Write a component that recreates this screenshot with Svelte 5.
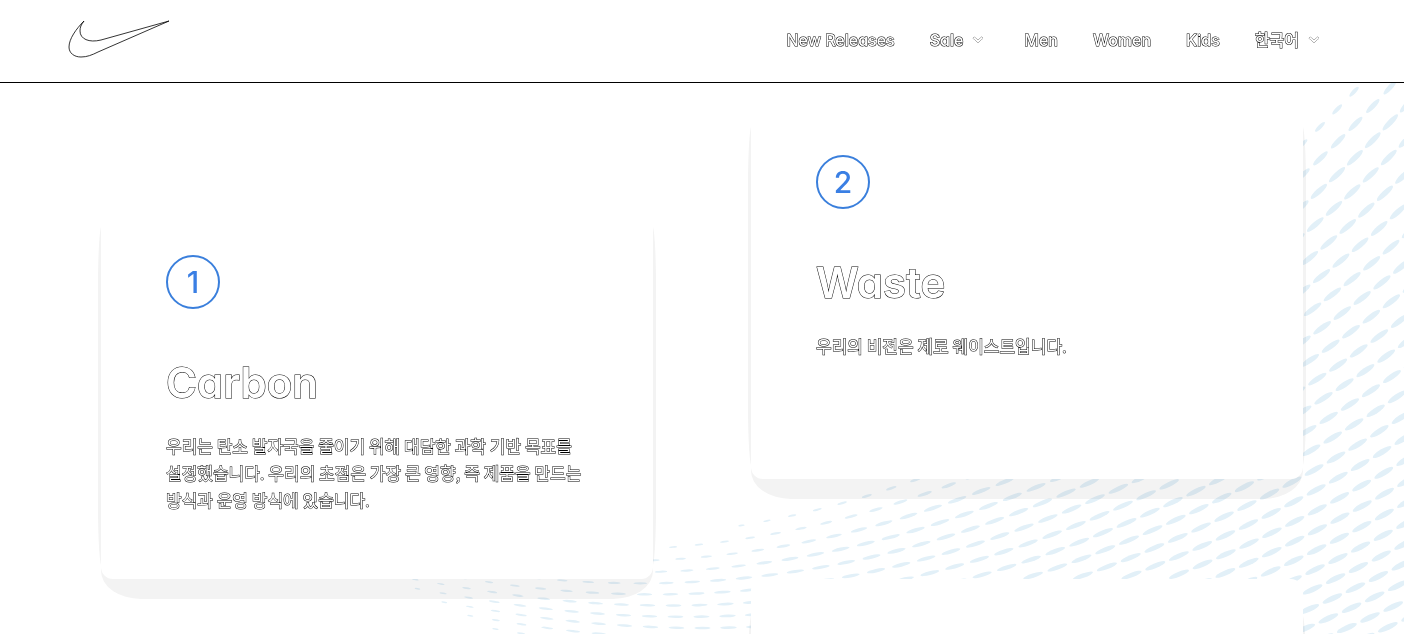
<script>
  const nav = [
    { label: 'New Releases' },
    { label: 'Sale', menu: true },
    { label: 'Men' },
    { label: 'Women' },
    { label: 'Kids' },
    { label: '한국어', menu: true }
  ];

  const cards = [
    {
      number: 1,
      title: 'Carbon',
      text: '우리는 탄소 발자국을 줄이기 위해 대담한 과학 기반 목표를 설정했습니다. 우리의 초점은 가장 큰 영향, 즉 제품을 만드는 방식과 운영 방식에 있습니다.'
    },
    { number: 2, title: 'Waste', text: '우리의 비전은 제로 웨이스트입니다.' }
  ];

  // Piecewise linear interpolation through [x, value] stops.
  function lerp(stops, x) {
    if (x <= stops[0][0]) return stops[0][1];
    for (let i = 1; i < stops.length; i++) {
      const [x1, v1] = stops[i];
      const [x0, v0] = stops[i - 1];
      if (x <= x1) return v0 + ((v1 - v0) * (x - x0)) / (x1 - x0);
    }
    return stops[stops.length - 1][1];
  }

  const rise = [[400, -0.2], [500, -0.15], [650, -0.01], [750, 0.08], [900, 0.2], [1100, 0.35], [1350, 0.47], [1420, 0.49]];
  const bend = [[500, 0.0008], [700, 0.0013], [900, 0.0012], [1100, 0.0008], [1350, 0.0007]];
  const edge = [[380, 570], [460, 566], [640, 541], [730, 528], [830, 495], [880, 476], [1000, 430], [1200, 250], [1300, 120], [1342, 76], [1404, 20]];
  const gaps = [[60, 34], [130, 33], [313, 25], [600, 18], [900, 16]];

  function slope(x, y) {
    const d = Math.max(-120, 600 - y);
    return lerp(rise, x) * (1 + 0.000002 * d * d) + lerp(bend, x) * d;
  }

  function dash(x, y) {
    const s = slope(x, y);
    const top = (y - lerp(edge, x)) / Math.sqrt(1 + s * s);
    const left = (x - 375 - (y - 580) * 1.8) / 110;
    const t = Math.min(1, 0.15 + top / 60, left);
    if (t <= 0.16 || y < 60 || y > 645) return null;
    const scale = lerp([[450, 0.6], [700, 0.75], [1100, 1]], x);
    return {
      x,
      y,
      rx: (3 + 7.8 * t) * scale,
      ry: lerp([[450, 1.1], [700, 1.3], [1000, 2.1], [1350, 2.8]], x) * (0.5 + 0.5 * t),
      angle: (-Math.atan(s) * 180) / Math.PI
    };
  }

  function buildField() {
    const out = [];
    let seedX = 1361;
    for (let y0 = 28; y0 < 1200; ) {
      for (const dir of [-1, 1]) {
        let x = seedX;
        let y = y0 - (seedX - 1350) * slope(1350, y0);
        let first = true;
        while (x > 380 && x < 1420) {
          if (dir < 0 || !first) {
            const d = dash(x, y);
            if (d) out.push(d);
          }
          first = false;
          const s = slope(x, y);
          const dx = (dir * 26) / Math.sqrt(1 + s * s * 1.2);
          const mid = slope(x + dx / 2, y - (dx / 2) * s);
          x += dx;
          y -= dx * mid;
        }
      }
      const s = slope(1350, y0);
      const step = 26 / Math.sqrt(1 + s * s * 1.2);
      seedX += 20 - 0.045 * (y0 - 60);
      while (seedX > 1350 + step) seedX -= step;
      while (seedX < 1350) seedX += step;
      y0 += lerp(gaps, y0);
    }
    return out;
  }

  const field = buildField();
</script>

<header>
  <a class="logo" href="#home" aria-label="Nike">
    <svg width="104" height="40" viewBox="0 0 104 40">
      <path d="M17 1C9 9 2 19 2 27C2 33 7 37 14 37C20 37 25 35 31 32L102 1L34 20C22 23 13 19 13 11C13 7 14 5 17 1Z" />
    </svg>
  </a>
  <nav>
    <ul>
      {#each nav as item}
        <li>
          {#if item.menu}
            <button type="button" class="link menu">
              {item.label}
              <svg width="12" height="8" viewBox="0 0 12 8" aria-hidden="true">
                <path d="M1 2.2L2.2 1L6 4.2L9.8 1L11 2.2L6 6.6Z" />
              </svg>
            </button>
          {:else}
            <a class="link" href="#{item.label}">{item.label}</a>
          {/if}
        </li>
      {/each}
    </ul>
  </nav>
</header>

<main>
  <svg class="pattern" width="1404" height="634" viewBox="0 0 1404 634" aria-hidden="true">
    {#each field as d}
      <ellipse rx={d.rx} ry={d.ry} transform="translate({d.x} {d.y}) rotate({d.angle})" />
    {/each}
  </svg>
  <div class="column first">
    <article class="card">
      <span class="number">{cards[0].number}</span>
      <h2>{cards[0].title}</h2>
      <p>{cards[0].text}</p>
    </article>
  </div>
  <div class="column">
    <article class="card">
      <span class="number">{cards[1].number}</span>
      <h2>{cards[1].title}</h2>
      <p>{cards[1].text}</p>
    </article>
    <article class="card"></article>
  </div>
</main>

<style>
  :global(body) {
    margin: 0;
    background: #fff;
    font-family: Inter, 'Noto Sans CJK KR', sans-serif;
  }
  :global(#app) {
    height: 100vh;
    overflow: hidden;
    display: flex;
    flex-direction: column;
  }
  header {
    display: flex;
    flex: none;
    align-items: center;
    justify-content: space-between;
    box-sizing: border-box;
    height: 83px;
    padding: 0 84px 3px 67px;
    border-bottom: 1px solid #000;
    background: #fff;
  }
  .logo svg {
    display: block;
  }
  .logo path {
    fill: #fff;
    stroke: #000;
    stroke-width: 0.8;
  }
  ul {
    display: flex;
    gap: 35px;
    margin: 0;
    padding: 0;
    list-style: none;
  }
  .link {
    display: flex;
    align-items: center;
    gap: 9px;
    padding: 0;
    border: 0;
    background: none;
    font: 500 16px/24px Inter, 'Noto Sans CJK KR', sans-serif;
    font-feature-settings: 'cv11';
    text-decoration: none;
    color: #fff;
    -webkit-text-stroke: 1px #000;
    paint-order: stroke fill;
    will-change: opacity;
  }
  .menu {
    padding-right: 5px;
  }
  li:last-child .menu {
    padding-right: 0;
  }
  .menu path {
    fill: #fff;
    stroke: #222;
    stroke-width: 0.6;
  }
  main {
    position: relative;
    isolation: isolate;
    flex: 1;
    display: grid;
    grid-template-columns: 1fr 1fr;
    gap: 98px;
    align-items: start;
    padding: 7px 101px 0;
    background: #fff;
    overflow: hidden;
  }
  .pattern {
    position: absolute;
    z-index: -2;
    right: 0;
    bottom: 0;
    fill: #e2f0f8;
  }
  .column {
    display: grid;
    gap: 100px;
  }
  .first {
    padding-top: 100px;
  }
  .card {
    position: relative;
    box-sizing: border-box;
    min-height: 389px;
    padding: 65px;
    border-radius: 12px;
    background: #fff;
  }
  .card::before,
  .card::after {
    content: '';
    position: absolute;
    z-index: -1;
    background: #f3f3f3;
    mix-blend-mode: multiply;
  }
  .card::before {
    inset: 60px 0 -20px;
    border-radius: 0 0 40px 40px / 0 0 28px 28px;
  }
  .card::after {
    inset: 35px -3px 12px;
    border-radius: 4px / 60px;
    clip-path: polygon(0 0, 3px 0, 3px 100%, calc(100% - 3px) 100%, calc(100% - 3px) 0, 100% 0, 100% 100%, 0 100%);
  }
  .number {
    display: grid;
    place-items: center;
    box-sizing: border-box;
    width: 54px;
    height: 54px;
    border: 2px solid #3a7fdc;
    border-radius: 50%;
    font-size: 30px;
    font-weight: 500;
    line-height: 30px;
    color: #3a7fe4;
    will-change: opacity;
  }
  h2 {
    margin: 44px 0 0;
    font-size: 42px;
    font-weight: 600;
    line-height: 60px;
    font-feature-settings: 'cv11';
    color: #fff;
    -webkit-text-stroke: 1px #000;
    paint-order: stroke fill;
    will-change: opacity;
  }
  p {
    margin: 19px 0 0;
    font-family: 'Noto Sans CJK KR', sans-serif;
    font-size: 17px;
    line-height: 27px;
    word-break: keep-all;
    color: #fff;
    -webkit-text-stroke: 1px #000;
    paint-order: stroke fill;
    will-change: opacity;
  }
</style>
